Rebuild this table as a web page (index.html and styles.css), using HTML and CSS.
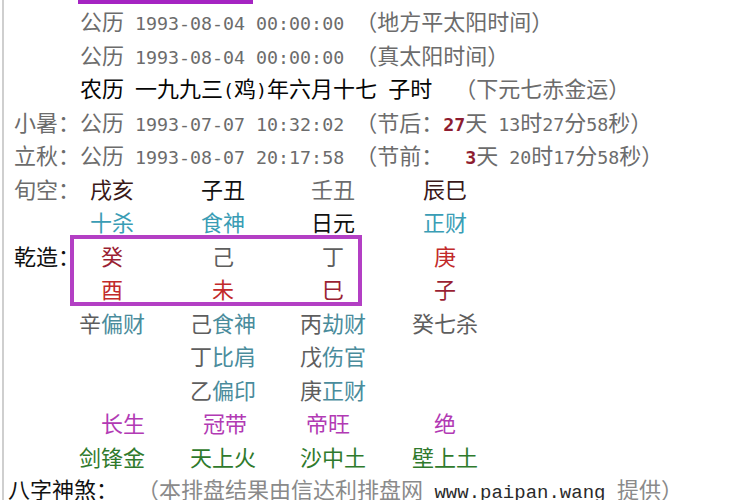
FILE: index.html
```html
<!DOCTYPE html>
<html lang="zh-CN">
<head>
<meta charset="utf-8">
<title>排盘</title>
<link rel="stylesheet" href="styles.css">
</head>
<body>
<div class="page">
  <div class="topbar"></div>
  <div class="rows">
    <div class="row gray indent">公历<span class="m"> 1993-08-04 00:00:00 </span>（地方平太阳时间）</div>
    <div class="row gray indent">公历<span class="m"> 1993-08-04 00:00:00 </span>（真太阳时间）</div>
    <div class="row black indent">农历<span class="m"> </span>一九九三<span class="m">(</span>鸡<span class="m">)</span>年六月十七<span class="m"> </span>子时<span class="m">  </span><span class="gray">（下元七赤金运）</span></div>
    <div class="row gray">小暑：公历<span class="m"> 1993-07-07 10:32:02 </span>（节后：<b class="num">27</b>天<span class="m"> 13</span>时<span class="m">27</span>分<span class="m">58</span>秒）</div>
    <div class="row gray">立秋：公历<span class="m"> 1993-08-07 20:17:58 </span>（节前：<span class="m"> </span><b class="num"> 3</b>天<span class="m"> 20</span>时<span class="m">17</span>分<span class="m">58</span>秒）</div>

    <div class="row grid">
      <span class="label gray">旬空：</span>
      <span class="c c1 dk">戌亥</span>
      <span class="c c2 blk">子丑</span>
      <span class="c c3 gray">壬丑</span>
      <span class="c c4 dk">辰巳</span>
    </div>
    <div class="row grid">
      <span class="label"></span>
      <span class="c c1 teal">十杀</span>
      <span class="c c2 teal">食神</span>
      <span class="c c3 blk">日元</span>
      <span class="c c4 teal">正财</span>
    </div>
    <div class="pillars">
      <div class="row grid">
        <span class="label blk">乾造：</span>
        <span class="c c1 dred">癸</span>
        <span class="c c2 stem">己</span>
        <span class="c c3 stem">丁</span>
        <span class="c c4 red">庚</span>
      </div>
      <div class="row grid">
        <span class="label"></span>
        <span class="c c1 red">酉</span>
        <span class="c c2 red">未</span>
        <span class="c c3 dred">巳</span>
        <span class="c c4 dred">子</span>
      </div>
      <div class="frame"></div>
    </div>
    <div class="row grid">
      <span class="label"></span>
      <span class="c c1"><span class="stem">辛</span><span class="god">偏财</span></span>
      <span class="c c2"><span class="stem">己</span><span class="god">食神</span></span>
      <span class="c c3"><span class="stem">丙</span><span class="god">劫财</span></span>
      <span class="c c4"><span class="stem">癸</span><span class="stem">七杀</span></span>
    </div>
    <div class="row grid">
      <span class="label"></span>
      <span class="c c1"></span>
      <span class="c c2"><span class="stem">丁</span><span class="god">比肩</span></span>
      <span class="c c3"><span class="stem">戊</span><span class="god">伤官</span></span>
      <span class="c c4"></span>
    </div>
    <div class="row grid">
      <span class="label"></span>
      <span class="c c1"></span>
      <span class="c c2"><span class="stem">乙</span><span class="god">偏印</span></span>
      <span class="c c3"><span class="stem">庚</span><span class="god">正财</span></span>
      <span class="c c4"></span>
    </div>
    <div class="row grid stage">
      <span class="label"></span>
      <span class="c c1 s1">长生</span>
      <span class="c c2 s2">冠带</span>
      <span class="c c3 s3">帝旺</span>
      <span class="c c4">绝</span>
    </div>
    <div class="row grid nayin">
      <span class="label"></span>
      <span class="c c1">剑锋金</span>
      <span class="c c2">天上火</span>
      <span class="c c3">沙中土</span>
      <span class="c c4">壁上土</span>
    </div>
    <div class="row foot"><span class="blk">八字神煞：</span><span class="note">（本排盘结果由信达利排盘网<span class="url"> www.paipan.wang </span>提供）</span></div>
  </div>
</div>
</body>
</html>
```
FILE: styles.css
```css
html, body {
  margin: 0;
  padding: 0;
  background: #ffffff;
}
body {
  width: 750px;
  height: 500px;
  overflow: hidden;
  font-family: "Noto Sans CJK SC", "Noto Sans", sans-serif;
  font-size: 22px;
}
.page {
  margin-left: 2px;
  border-left: 2px solid #cfcfcf;
  padding-left: 10px;
  height: 500px;
  position: relative;
}
.topbar {
  width: 175px;
  height: 4px;
  margin-left: 64px;
  background: #a524c2;
}
.rows {
  display: flex;
  flex-direction: column;
}
.row {
  height: 33.5px;
  line-height: 33.5px;
  white-space: nowrap;
}
.indent { margin-left: 66px; }
.m {
  font-family: "DejaVu Sans Mono", monospace;
  font-size: 18.3px;
  white-space: pre;
}
.gray { color: #6c6c6c; }
.black { color: #050505; }
.blk { color: #111111; }
.dk { color: #3a1818; }
.teal { color: #3a9db5; }
.red { color: #c22a2a; }
.dred { color: #9a1f33; }
.stem { color: #5e5e5e; }
.god { color: #4a8c9c; }
.num {
  font-family: "DejaVu Sans Mono", monospace;
  font-size: 18.3px;
  font-weight: bold;
  color: #8e1c30;
  white-space: pre;
}
.grid {
  display: flex;
}
.label {
  width: 42px;
  flex: none;
  overflow: visible;
}
.c {
  flex: none;
  text-align: center;
}
.c1 { width: 112px; }
.c2 { width: 110px; }
.c3 { width: 110px; }
.c4 { width: 114px; }
.pillars {
  position: relative;
}
.frame {
  position: absolute;
  left: 56px;
  top: -4px;
  width: 284px;
  height: 63px;
  border: 4px solid #b33fc4;
}
.stage .c { color: #b23ab4; }
.stage .s1 { padding-left: 22px; box-sizing: border-box; }
.stage .s2 { padding-left: 4px; box-sizing: border-box; }
.stage .s3 { padding-right: 10px; box-sizing: border-box; }
.nayin .c { color: #2f7a2c; }
.foot {
  margin-left: -6px;
  height: 30px;
  line-height: 30px;
}
.note {
  color: #8a8a8a;
  margin-left: 30px;
}
.url {
  font-family: "Liberation Mono", monospace;
  font-size: 19px;
  color: #2a2a2a;
  white-space: pre;
}
```
